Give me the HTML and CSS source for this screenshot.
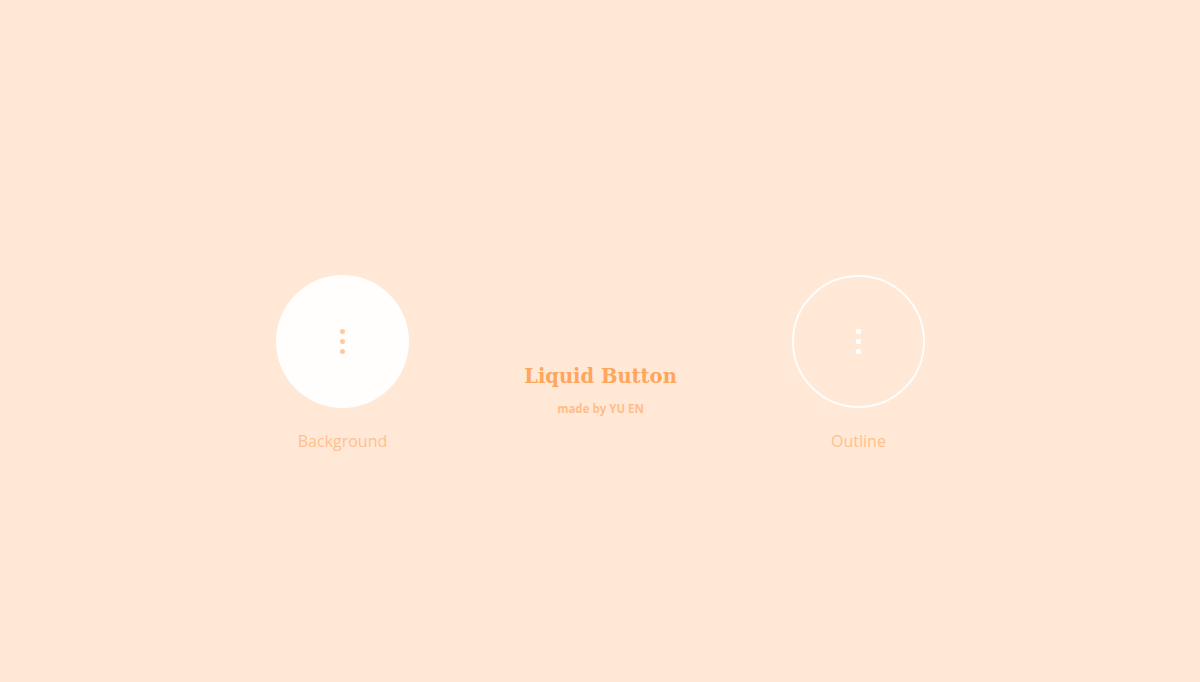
FILE: index.html
```html
<!DOCTYPE html>
<html lang="en">
<head>
<meta charset="utf-8">
<title>Liquid Button</title>
<link rel="stylesheet" href="styles.css">
</head>
<body>
<main class="stage">
  <div class="item">
    <button class="btn btn-fill" aria-label="Background">
      <span class="dots"><i></i><i></i><i></i></span>
    </button>
    <div class="label">Background</div>
  </div>
  <div class="center">
    <h1 class="title">Liquid Button</h1>
    <p class="byline">made by YU EN</p>
  </div>
  <div class="item">
    <button class="btn btn-outline" aria-label="Outline">
      <span class="dots"><i></i><i></i><i></i></span>
    </button>
    <div class="label">Outline</div>
  </div>
</main>
</body>
</html>
```
FILE: styles.css
```css
html, body {
  margin: 0;
  padding: 0;
  height: 100%;
}
body {
  background: #ffe8d6;
  font-family: "Open Sans", "DejaVu Sans", sans-serif;
}
.stage {
  width: 649px;
  margin: 0 auto;
  padding: 275px 0 0 1px;
  display: grid;
  grid-template-columns: 133px 1fr 133px;
  align-items: start;
}
.item {
  display: flex;
  flex-direction: column;
  align-items: center;
}
.btn {
  width: 133px;
  height: 133px;
  border-radius: 50%;
  padding: 0;
  margin: 0;
  display: flex;
  align-items: center;
  justify-content: center;
  box-sizing: border-box;
  cursor: pointer;
}
.btn-fill {
  background: #fffefd;
  border: none;
}
.btn-outline {
  background: transparent;
  border: 2px solid rgba(255, 255, 255, 0.85);
}
.dots {
  display: flex;
  flex-direction: column;
  gap: 5px;
}
.dots i {
  display: block;
  width: 5px;
  height: 5px;
  border-radius: 50%;
}
.btn-fill .dots i { background: #ffc89e; }
.btn-outline .dots i { background: #ffffff; border-radius: 1.5px; }
.label {
  margin-top: 23px;
  font-size: 16px;
  line-height: 20px;
  color: #ffc08f;
  white-space: nowrap;
}
.center {
  margin-top: 87px;
  text-align: center;
}
.title {
  margin: 0;
  font-family: "DejaVu Serif", "Liberation Serif", serif;
  font-weight: bold;
  font-size: 19.5px;
  line-height: 30px;
  color: #ffa55c;
}
.byline {
  margin: 9px 0 0;
  font-size: 11.5px;
  line-height: 16px;
  font-weight: bold;
  color: #ffbd8a;
}
```
